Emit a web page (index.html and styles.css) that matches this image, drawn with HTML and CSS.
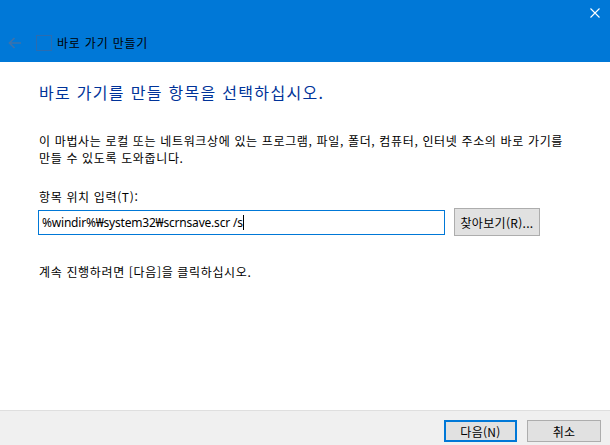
FILE: index.html
```html
<!DOCTYPE html>
<html lang="ko">
<head>
<meta charset="utf-8">
<title>바로 가기 만들기</title>
<link rel="stylesheet" href="styles.css">
</head>
<body>
<div class="window">
  <div class="header">
    <div class="topbar">
      <svg class="close" width="10" height="10" viewBox="0 0 10 10"><path d="M0.5 0.5 L9.5 9.5 M9.5 0.5 L0.5 9.5" stroke="#ffffff" stroke-width="1.1" fill="none"/></svg>
    </div>
    <div class="titlerow">
      <svg class="back" width="14" height="12" viewBox="0 0 14 12"><path d="M13 6 H1.5 M6.5 1 L1.5 6 L6.5 11" stroke="#3d72ab" stroke-width="1.7" fill="none"/></svg>
      <span class="appicon"></span>
      <span class="title">바로 가기 만들기</span>
    </div>
  </div>
  <div class="content">
    <h1 class="heading">바로 가기를 만들 항목을 선택하십시오.</h1>
    <p class="desc">이 마법사는 로컬 또는 네트워크상에 있는 프로그램, 파일, 폴더, 컴퓨터, 인터넷 주소의 바로 가기를 만들 수 있도록 도와줍니다.</p>
    <div class="label">항목 위치 입력(T):</div>
    <div class="inputrow">
      <div class="input"><span class="value">%windir%₩system32₩scrnsave.scr /s</span><span class="caret"></span></div>
      <div class="btn browse">찾아보기(R)...</div>
    </div>
    <p class="next-hint">계속 진행하려면 [다음]을 클릭하십시오.</p>
  </div>
  <div class="footer">
    <div class="btn fbtn primary">다음(N)</div>
    <div class="btn fbtn">취소</div>
  </div>
</div>
</body>
</html>
```

FILE: styles.css
```css
html, body {
  margin: 0;
  padding: 0;
}
body {
  width: 610px;
  height: 445px;
  overflow: hidden;
  font-family: "Noto Sans CJK KR", "Noto Sans", sans-serif;
  font-size: 12px;
  letter-spacing: 0.65px;
  word-break: keep-all;
  color: #000000;
  background: #ffffff;
}
.window {
  display: flex;
  flex-direction: column;
  width: 610px;
  height: 445px;
}
.header {
  height: 62px;
  background: #0078d7;
  display: flex;
  flex-direction: column;
  flex: none;
}
.topbar {
  height: 28px;
  display: flex;
  justify-content: flex-end;
  align-items: flex-start;
  padding-right: 10px;
}
.close {
  margin-top: 8px;
}
.titlerow {
  display: flex;
  align-items: center;
  height: 30px;
  padding-left: 8px;
}
.appicon {
  box-sizing: border-box;
  width: 16px;
  height: 16px;
  border: 1px solid #2a6cb0;
  margin-left: 14px;
}
.title {
  margin-left: 5px;
  font-size: 12px;
  line-height: 16px;
  letter-spacing: 0.8px;
  color: #000000;
}
.content {
  flex: 1;
  padding: 0 0 0 39px;
  display: flex;
  flex-direction: column;
}
.heading {
  margin: 19px 0 0 0;
  font-size: 16px;
  font-weight: normal;
  line-height: 22px;
  letter-spacing: 1.3px;
  color: #003399;
}
.desc {
  margin: 29px 0 0 0;
  width: 545px;
  line-height: 17px;
}
.label {
  margin-top: 22px;
  line-height: 17px;
}
.inputrow {
  display: flex;
  align-items: center;
  margin-top: 3px;
  margin-left: -1px;
}
.input {
  width: 407px;
  height: 25px;
  box-sizing: border-box;
  border: 1px solid #0078d7;
  display: flex;
  align-items: center;
  padding-left: 3px;
  font-family: "Noto Sans", "Noto Sans CJK KR", sans-serif;
  font-size: 12px;
  letter-spacing: -0.2px;
}
.caret {
  width: 1px;
  height: 15px;
  background: #000000;
}
.btn {
  box-sizing: border-box;
  border: 1px solid #adadad;
  background: #e1e1e1;
  display: flex;
  align-items: center;
  justify-content: center;
  letter-spacing: 0.3px;
}
.browse {
  width: 86px;
  height: 28px;
  margin-left: 9px;
}
.next-hint {
  margin: 27px 0 0 0;
  line-height: 17px;
}
.footer {
  height: 35px;
  flex: none;
  box-sizing: border-box;
  border-top: 1px solid #dfdfdf;
  background: #f0f0f0;
  display: flex;
  justify-content: flex-end;
  align-items: flex-start;
  padding-top: 9px;
  padding-right: 9px;
  gap: 10px;
}
.fbtn {
  width: 74px;
  height: 22px;
}
.primary {
  border: 2px solid #0078d7;
  width: 73px;
}
```
